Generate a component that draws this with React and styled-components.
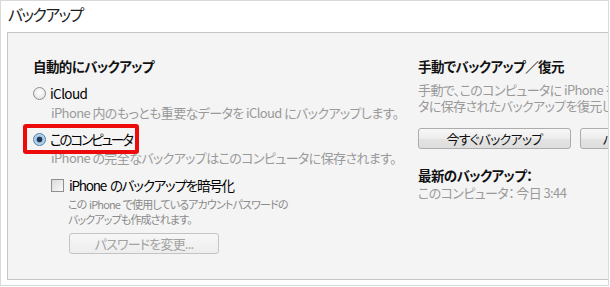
import React from "react";
import styled, { createGlobalStyle, css } from "styled-components";

const GlobalStyle = createGlobalStyle`
  body {
    margin: 0;
    background: #fff;
    font-family: "Noto Sans CJK JP", "Open Sans", sans-serif;
    font-feature-settings: "palt";
  }
`;

const Frame = styled.div`
  box-sizing: border-box;
  width: 609px;
  height: 286px;
  border: 1px solid #d9d9d9;
  display: flex;
  flex-direction: column;
  padding: 0 0 5px 6px;
  overflow: hidden;
`;

const Title = styled.h1`
  margin: 0;
  height: 31px;
  padding-left: 1px;
  font-size: 16px;
  font-weight: normal;
  line-height: 26px;
  color: #1e1e1e;
  letter-spacing: -1.6px;
`;

const Panel = styled.div`
  flex: 1;
  background: #f4f4f4;
  border: 1px solid #c6c6c6;
  border-right: none;
  display: grid;
  grid-template-columns: 385px 1fr;
  padding: 24px 0 0 25px;
  min-width: 0;
`;

const Column = styled.div`
  display: flex;
  flex-direction: column;
  min-width: 0;
  white-space: nowrap;
  ${(p) =>
    p.$clip &&
    css`
      overflow: hidden;
    `}
`;

const Heading = styled.div`
  font-size: 13.5px;
  font-weight: bold;
  line-height: 18px;
  color: #111;
  letter-spacing: -0.6px;
  margin-top: ${(p) => p.$top || 0}px;
`;

const Option = styled.div`
  position: relative;
  display: flex;
  align-items: center;
  gap: 4px;
  height: 18px;
  font-size: 13.5px;
  color: #000;
  letter-spacing: ${(p) => p.$spacing ?? -1}px;
  word-spacing: 2px;
  margin-top: ${(p) => p.$top || 0}px;
  margin-left: ${(p) => p.$indent || 0}px;
  ${(p) =>
    p.$highlight &&
    css`
      &::after {
        content: "";
        position: absolute;
        left: -10px;
        top: -6px;
        width: 116px;
        height: 30px;
        box-sizing: border-box;
        border: 4px solid #ec0a0a;
        border-radius: 3px;
      }
    `}
`;

const Radio = styled.span`
  box-sizing: border-box;
  width: 13px;
  height: 13px;
  border-radius: 50%;
  border: 1px solid #8d8d8d;
  background: radial-gradient(circle at 50% 40%, #ffffff 0%, #e4e4e4 80%);
  flex: none;
  ${(p) =>
    p.$checked &&
    css`
      border-color: #4a7ea8;
      background: radial-gradient(circle, #1f3556 0 2.5px, #9fc3e3 3.2px, #dfeaf5 100%);
    `}
`;

const Checkbox = styled.span`
  box-sizing: border-box;
  width: 13px;
  height: 13px;
  border: 1px solid #8e8f8f;
  background: linear-gradient(135deg, #dadada, #fbfbfb);
  flex: none;
  margin-right: 1px;
`;

const Note = styled.div`
  font-size: 13px;
  line-height: ${(p) => p.$lh || 18}px;
  color: #9a9a9a;
  letter-spacing: -0.6px;
  margin-top: ${(p) => p.$top || 0}px;
  margin-left: ${(p) => p.$indent || 0}px;
`;

const SmallNote = styled.div`
  font-size: 11px;
  line-height: 15px;
  color: #8a8a8a;
  letter-spacing: -0.85px;
  word-spacing: 1px;
  margin-top: ${(p) => p.$top || 0}px;
  margin-left: ${(p) => p.$indent || 0}px;
`;

const ButtonRow = styled.div`
  display: flex;
  gap: 9px;
  margin-top: ${(p) => p.$top || 0}px;
  margin-left: ${(p) => p.$indent || 0}px;
`;

const Button = styled.div`
  box-sizing: border-box;
  flex: none;
  width: ${(p) => p.$width}px;
  height: 21px;
  border: 1px solid #acacac;
  border-radius: 3px;
  background: linear-gradient(#f7f7f7, #ededed 50%, #e3e3e3 51%, #dedede);
  font-size: 13px;
  line-height: 19px;
  text-align: center;
  color: #111;
  letter-spacing: -0.8px;
  ${(p) =>
    p.$disabled &&
    css`
      border-color: #c4c4c4;
      background: linear-gradient(#f7f7f7, #ededed);
      color: #a2a2a2;
    `}
`;

export default function App() {
  return (
    <>
      <GlobalStyle />
      <Frame>
        <Title>バックアップ</Title>
        <Panel>
          <Column>
            <Heading>自動的にバックアップ</Heading>
            <Option $top={9} $spacing={-0.6}>
              <Radio />
              iCloud
            </Option>
            <Note $top={2} $indent={18}>
              iPhone 内のもっとも重要なデータを iCloud にバックアップします。
            </Note>
            <Option $top={8} $spacing={-2.1} $highlight>
              <Radio $checked />
              このコンピュータ
            </Option>
            <Note $top={1} $indent={18}>
              iPhone の完全なバックアップはこのコンピュータに保存されます。
            </Note>
            <Option $top={9} $indent={18} $spacing={-1.2}>
              <Checkbox />
              iPhone のバックアップを暗号化
            </Option>
            <SmallNote $top={3} $indent={35}>
              この iPhone で使用しているアカウントパスワードの
              <br />
              バックアップも作成されます。
            </SmallNote>
            <ButtonRow $top={6} $indent={36}>
              <Button $width={150} $disabled>
                パスワードを変更...
              </Button>
            </ButtonRow>
          </Column>
          <Column $clip>
            <Heading>手動でバックアップ／復元</Heading>
            <Note $top={7} $lh={16}>
              手動で、このコンピュータに iPhone をバックアップしたり、このコンピュー
              <br />
              タに保存されたバックアップを復元したりします。
            </Note>
            <ButtonRow $top={14}>
              <Button $width={153}>今すぐバックアップ</Button>
              <Button $width={153}>バックアップを復元...</Button>
            </ButtonRow>
            <Heading $top={17}>最新のバックアップ：</Heading>
            <Note>このコンピュータ： 今日 3:44</Note>
          </Column>
        </Panel>
      </Frame>
    </>
  );
}
